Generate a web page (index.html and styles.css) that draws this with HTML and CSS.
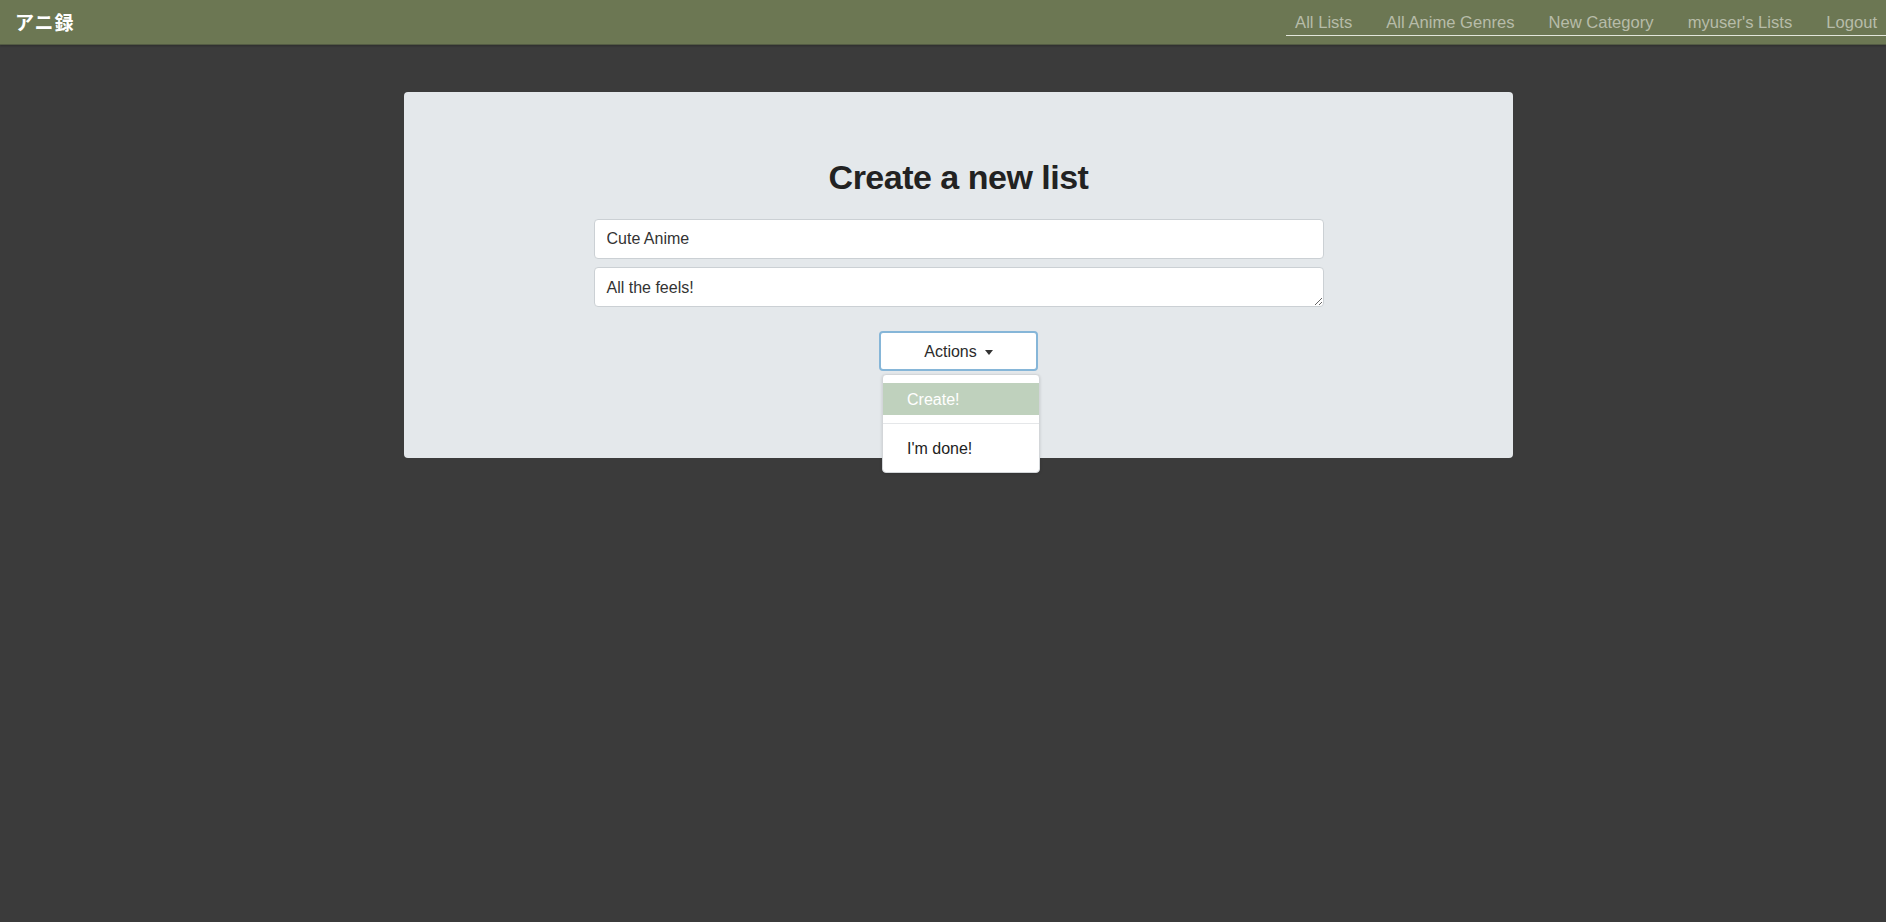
FILE: index.html
```html
<!DOCTYPE html>
<html lang="en">
<head>
<meta charset="utf-8">
<title>Create a new list</title>
<link rel="stylesheet" href="styles.css">
</head>
<body>
<header class="navbar">
  <a class="brand" href="#">アニ録</a>
  <ul class="nav-links">
    <li><a href="#">All Lists</a></li>
    <li><a href="#">All Anime Genres</a></li>
    <li><a href="#">New Category</a></li>
    <li><a href="#">myuser's Lists</a></li>
    <li><a href="#">Logout</a></li>
  </ul>
</header>
<main class="page">
  <section class="card">
    <h1 class="title">Create a new list</h1>
    <form class="form">
      <input class="field" type="text" value="Cute Anime">
      <textarea class="field area">All the feels!</textarea>
      <div class="actions">
        <button type="button" class="btn">Actions <span class="caret"></span></button>
        <div class="menu">
          <a class="menu-item active" href="#">Create!</a>
          <div class="divider"></div>
          <a class="menu-item" href="#">I'm done!</a>
        </div>
      </div>
    </form>
  </section>
</main>
</body>
</html>
```
FILE: styles.css
```css
html, body {
  margin: 0;
  padding: 0;
  height: 100%;
}
body {
  background: #3b3b3b;
  font-family: "Liberation Sans", Arial, sans-serif;
  color: #212529;
}
.navbar {
  height: 44px;
  background: #6c7753;
  border-bottom: 1px solid #535b43;
  box-shadow: 0 1px 2px rgba(0, 0, 0, 0.25);
  display: flex;
  align-items: center;
  justify-content: space-between;
}
.brand {
  margin-left: 15px;
  color: #fff;
  text-decoration: none;
  font-family: "Noto Sans CJK JP", sans-serif;
  font-weight: 700;
  font-size: 19px;
  letter-spacing: 1px;
  line-height: 44px;
}
.nav-links {
  list-style: none;
  margin: 0;
  padding: 0 9px 0 9px;
  display: flex;
  gap: 34px;
  align-self: flex-start;
  margin-top: 9px;
  border-bottom: 1px solid #e2e6da;
  height: 26px;
}
.nav-links a {
  color: #b7bca9;
  text-decoration: none;
  font-size: 16.6px;
  line-height: 27px;
  display: block;
}
.page {
  display: flex;
  justify-content: center;
  padding: 47px 0 0 31px;
}
.card {
  width: 1109px;
  background: #e4e8eb;
  border-radius: 4px;
  padding: 64px 0 87px;
  display: flex;
  flex-direction: column;
  align-items: center;
}
.title {
  margin: 0 0 20px;
  font-size: 34px;
  font-weight: 700;
  line-height: 43px;
  color: #222;
  letter-spacing: -0.5px;
}
.form {
  width: 730px;
  display: flex;
  flex-direction: column;
  align-items: center;
  gap: 8px;
}
.field {
  box-sizing: border-box;
  width: 100%;
  height: 40px;
  border: 1px solid #cbd0d4;
  border-radius: 4px;
  background: #fff;
  padding: 0 12px;
  font-family: "Liberation Sans", Arial, sans-serif;
  font-size: 16px;
  color: #333;
  margin: 0;
}
.area {
  display: block;
  padding-top: 10px;
  line-height: 20px;
  resize: vertical;
}
.actions {
  position: relative;
  margin-top: 16px;
}
.btn {
  box-sizing: border-box;
  width: 159px;
  height: 40px;
  background: #fff;
  border: 2px solid #86b6d8;
  border-radius: 4px;
  font-family: "Liberation Sans", Arial, sans-serif;
  font-size: 16px;
  color: #2b2b2b;
  display: flex;
  align-items: center;
  justify-content: center;
  gap: 8px;
  padding: 2px 0 0;
}
.caret {
  width: 0;
  height: 0;
  border-left: 4.5px solid transparent;
  border-right: 4.5px solid transparent;
  border-top: 5px solid #333;
}
.menu {
  position: absolute;
  top: 43px;
  left: 3px;
  width: 158px;
  box-sizing: border-box;
  background: #fff;
  border: 1px solid #d3d6d9;
  border-radius: 4px;
  padding: 8px 0;
  box-shadow: 0 1px 3px rgba(0, 0, 0, 0.15);
}
.menu-item {
  display: block;
  height: 32px;
  line-height: 33px;
  padding: 0 24px;
  color: #222;
  text-decoration: none;
  font-size: 16px;
}
.menu-item.active {
  background: #bfd1bd;
  color: #fff;
}
.divider {
  height: 1px;
  background: #e5e7e9;
  margin: 8px 0;
}
```
